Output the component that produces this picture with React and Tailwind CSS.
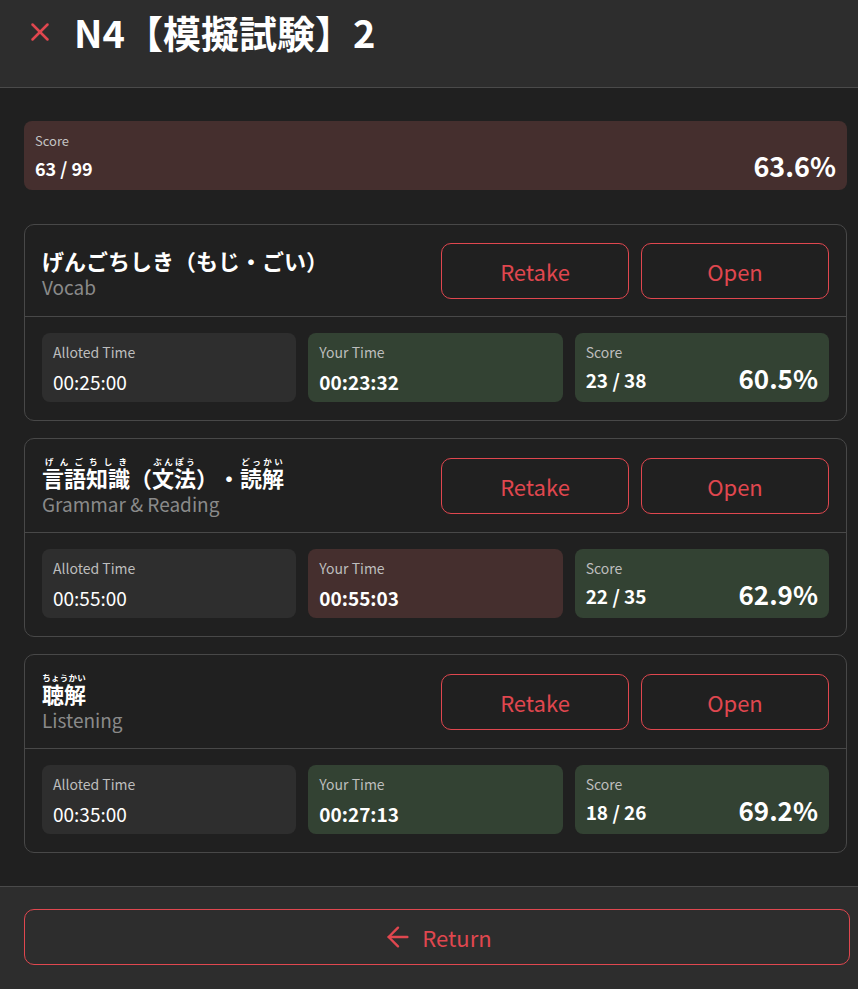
import { X, ArrowLeft } from 'lucide-react'

const font = { fontFamily: '"Noto Sans CJK JP", "Noto Sans", sans-serif' }

const sections = [
  {
    title: <span>げんごちしき（もじ・ごい）</span>,
    sub: 'Vocab',
    allotted: '00:25:00',
    yours: '00:23:32',
    over: false,
    score: '23 / 38',
    pct: '60.5%',
  },
  {
    title: (
      <span>
        <ruby>言語知識<rt>げんごちしき</rt></ruby>（<ruby>文法<rt>ぶんぽう</rt></ruby>）・<ruby>読解<rt>どっかい</rt></ruby>
      </span>
    ),
    sub: 'Grammar & Reading',
    allotted: '00:55:00',
    yours: '00:55:03',
    over: true,
    score: '22 / 35',
    pct: '62.9%',
  },
  {
    title: (
      <span>
        <ruby>聴解<rt>ちょうかい</rt></ruby>
      </span>
    ),
    sub: 'Listening',
    allotted: '00:35:00',
    yours: '00:27:13',
    over: false,
    score: '18 / 26',
    pct: '69.2%',
  },
]

function StatBox({ label, children, tone }) {
  const bg = tone === 'green' ? 'bg-[#334233]' : tone === 'red' ? 'bg-[#452f2e]' : 'bg-[#2e2e2e]'
  return (
    <div className={`${bg} rounded-lg h-[69px] px-[11px] pt-[9px]`}>
      <div className="text-[14px] leading-5 text-[#bdbdbd]">{label}</div>
      {children}
    </div>
  )
}

function Section({ s }) {
  return (
    <div className="border border-[#484848] rounded-[10px]">
      <div className="flex items-center justify-between pl-[17px] pr-[17px] pt-[18px] pb-[17px] border-b border-[#484848]">
        <div className="flex flex-col">
          <div className="text-[22px] leading-[32px] font-bold text-white [&_rt]:text-[8.5px] [&_rt]:leading-[7px] [&_rt]:font-bold">{s.title}</div>
          <div className="text-[19px] leading-[22px] text-[#8a8a8a]">{s.sub}</div>
        </div>
        <div className="flex gap-3">
          <button className="w-[188px] h-[56px] rounded-[10px] border border-[#e0474f] text-[#e0474f] text-[22px]">Retake</button>
          <button className="w-[188px] h-[56px] rounded-[10px] border border-[#e0474f] text-[#e0474f] text-[22px]">Open</button>
        </div>
      </div>
      <div className="grid grid-cols-3 gap-3 px-[17px] pt-4 pb-[18px]">
        <StatBox label="Alloted Time">
          <div className="text-[19px] leading-7 mt-[6px] text-white">{s.allotted}</div>
        </StatBox>
        <StatBox label="Your Time" tone={s.over ? 'red' : 'green'}>
          <div className="text-[19px] leading-7 mt-[6px] font-bold text-white">{s.yours}</div>
        </StatBox>
        <StatBox label="Score" tone="green">
          <div className="flex items-end justify-between">
            <div className="text-[19px] leading-7 font-bold text-white">{s.score}</div>
            <div className="text-[26px] leading-8 font-bold text-white">{s.pct}</div>
          </div>
        </StatBox>
      </div>
    </div>
  )
}

export default function App() {
  return (
    <div style={font} className="w-[858px] h-[989px] bg-[#202020] flex flex-col overflow-hidden [text-spacing-trim:space-all]">
      <header className="h-[88px] shrink-0 bg-[#2d2d2d] border-b border-[#4a4a4a] flex items-start pl-[25px] pt-[7px] gap-[19px]">
        <X className="text-[#e0474f] mt-[10px]" size={30} strokeWidth={2} />
        <h1 className="text-[38px] leading-[50px] font-bold text-white">N4【模擬試験】2</h1>
      </header>
      <main className="flex-1 pl-6 pr-[11px] pt-[33px]">
        <div className="bg-[#452f2e] rounded-lg h-[69px] px-[11px] pt-[10px] flex flex-col">
          <div className="text-[13px] leading-5 text-[#c4c4c4]">Score</div>
          <div className="flex items-end justify-between -mt-[1px]">
            <div className="text-[18px] leading-7 font-bold text-white">63 / 99</div>
            <div className="text-[27px] leading-8 font-bold text-white">63.6%</div>
          </div>
        </div>
        <div className="flex flex-col gap-[17px] mt-[34px]">
          {sections.map((s, i) => (
            <Section key={i} s={s} />
          ))}
        </div>
      </main>
      <footer className="h-[103px] shrink-0 bg-[#2d2d2d] border-t border-[#4a4a4a] pl-6 pr-2 pt-[22px]">
        <button className="w-full h-[56px] rounded-[10px] border border-[#e0474f] text-[#e0474f] text-[22px] flex items-center justify-center gap-[8px]">
          <ArrowLeft size={32} strokeWidth={1.8} />
          Return
        </button>
      </footer>
    </div>
  )
}
